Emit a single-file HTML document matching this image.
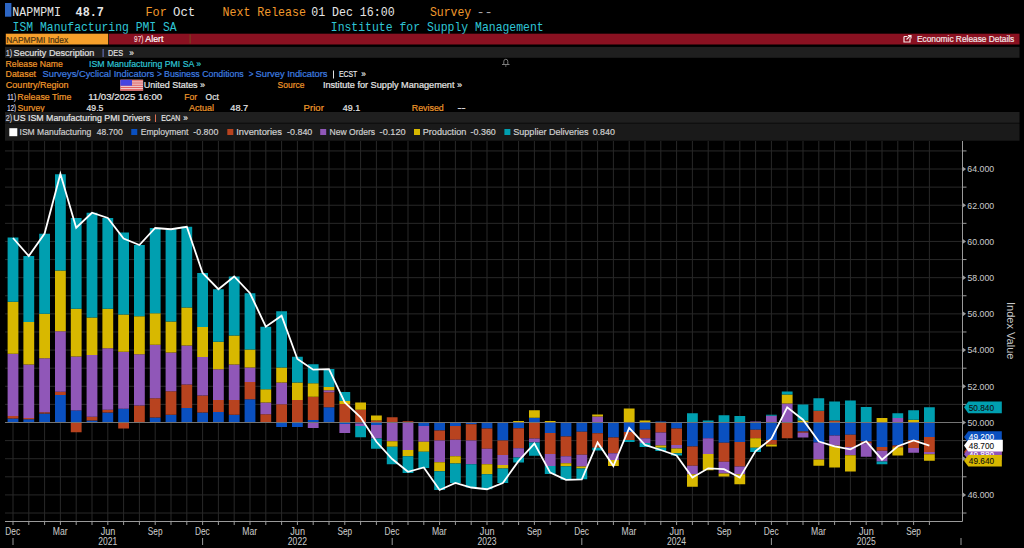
<!DOCTYPE html>
<html><head><meta charset="utf-8">
<style>
html,body{margin:0;padding:0;background:#000;width:1024px;height:548px;overflow:hidden}
svg{display:block;position:absolute;left:0;top:0}
text{font-family:"Liberation Sans",sans-serif}
text.m{font-family:"Liberation Mono",monospace;font-size:11.3px}
text.yl{font-size:9.5px;fill:#c4c4c4}
text.xl{font-size:9.5px;fill:#c4c4c4;text-anchor:middle}
text.rl{font-size:9.5px}
text.iv{font-size:10px;fill:#c4c4c4}
</style></head>
<body>
<svg width="1024" height="548" viewBox="0 0 1024 548"><rect x="5" y="3" width="6.4" height="13.7" fill="#2d66c4"/><text transform="translate(12.37 16) scale(1 1.2)" style='font-family:"Liberation Mono",monospace' font-size="11.3" fill="#e6e6e6" textLength="48.59" lengthAdjust="spacingAndGlyphs">NAPMPMI</text><text transform="translate(75.59 16) scale(1 1.2)" style='font-family:"Liberation Mono",monospace' font-size="11.3" font-weight="bold" fill="#e6e6e6" textLength="28.18" lengthAdjust="spacingAndGlyphs">48.7</text><text transform="translate(145.47 16) scale(1 1.2)" style='font-family:"Liberation Mono",monospace' font-size="11.3" fill="#f0992c" textLength="21.4" lengthAdjust="spacingAndGlyphs">For</text><text transform="translate(172.98 16) scale(1 1.2)" style='font-family:"Liberation Mono",monospace' font-size="11.3" fill="#e6e6e6" textLength="22.22" lengthAdjust="spacingAndGlyphs">Oct</text><text transform="translate(222.57 16) scale(1 1.2)" style='font-family:"Liberation Mono",monospace' font-size="11.3" fill="#f0992c" textLength="83.29" lengthAdjust="spacingAndGlyphs">Next Release</text><text transform="translate(311.21 16) scale(1 1.2)" style='font-family:"Liberation Mono",monospace' font-size="11.3" fill="#e6e6e6" textLength="83.4" lengthAdjust="spacingAndGlyphs">01 Dec 16:00</text><text transform="translate(429.94 16) scale(1 1.2)" style='font-family:"Liberation Mono",monospace' font-size="11.3" fill="#f0992c" textLength="41.26" lengthAdjust="spacingAndGlyphs">Survey</text><text transform="translate(476.46 16) scale(1 1.2)" style='font-family:"Liberation Mono",monospace' font-size="11.3" fill="#a8a8a8" textLength="16.28" lengthAdjust="spacingAndGlyphs">--</text><text transform="translate(12.61 30.85) scale(1 1.2)" style='font-family:"Liberation Mono",monospace' font-size="11.3" fill="#2fc6d6" textLength="164.11" lengthAdjust="spacingAndGlyphs">ISM Manufacturing PMI SA</text><text transform="translate(330.76 30.85) scale(1 1.2)" style='font-family:"Liberation Mono",monospace' font-size="11.3" fill="#2fc6d6" textLength="212.97" lengthAdjust="spacingAndGlyphs">Institute for Supply Management</text><rect x="5.8" y="33.7" width="102.4" height="10.8" fill="#f7a02b"/><rect x="109" y="33.7" width="910.5" height="10.8" fill="#8a1121"/><rect x="189.6" y="34.5" width="1" height="9" fill="#7a4a20"/><text x="6.33" y="42.5" style='font-family:"Liberation Sans",sans-serif' font-size="9.2" fill="#4a3210" textLength="61.76" lengthAdjust="spacingAndGlyphs" stroke="#4a3210" stroke-width="0.2">NAPMPMI Index</text><text x="134.11" y="42.2" style='font-family:"Liberation Sans",sans-serif' font-size="9.2" fill="#f0d0d0" textLength="9.31" lengthAdjust="spacingAndGlyphs" stroke="#f0d0d0" stroke-width="0.2">97)</text><text x="145.3" y="42.2" style='font-family:"Liberation Sans",sans-serif' font-size="9.2" fill="#ffffff" textLength="18.16" lengthAdjust="spacingAndGlyphs" stroke="#ffffff" stroke-width="0.2">Alert</text><path d="M904 36.5h3.5M904 36.5v5.5h6v-3.5M906.5 39.5l4-4M908 35.5h3v3" stroke="#f4e4e4" stroke-width="1.2" fill="none"/><text x="916.93" y="41.9" style='font-family:"Liberation Sans",sans-serif' font-size="9.2" fill="#f4e8e8" textLength="97.38" lengthAdjust="spacingAndGlyphs" stroke="#f4e8e8" stroke-width="0.2">Economic Release Details</text><rect x="5" y="46.9" width="1014.5" height="10.9" fill="#1f1f1f"/><text x="5.65" y="56.2" style='font-family:"Liberation Sans",sans-serif' font-size="9.2" fill="#c8c8d8" textLength="6.52" lengthAdjust="spacingAndGlyphs" stroke="#c8c8d8" stroke-width="0.2">1)</text><text x="13.59" y="56.2" style='font-family:"Liberation Sans",sans-serif' font-size="9.2" fill="#e0e0e0" textLength="80.77" lengthAdjust="spacingAndGlyphs" stroke="#e0e0e0" stroke-width="0.2">Security Description</text><rect x="102.6" y="49" width="1" height="8" fill="#6a7ad0"/><text x="108.02" y="56.2" style='font-family:"Liberation Sans",sans-serif' font-size="9.2" fill="#e0e0e0" textLength="15.02" lengthAdjust="spacingAndGlyphs" stroke="#e0e0e0" stroke-width="0.2">DES</text><text x="129.37" y="56.2" style='font-family:"Liberation Sans",sans-serif' font-size="9.2" fill="#e0e0e0" textLength="4.57" lengthAdjust="spacingAndGlyphs" stroke="#e0e0e0" stroke-width="0.2">»</text><path d="M502 64.5h7.5M503.8 64.5v-3.2a2 2 0 0 1 4 0v3.2M505 66h1.5" stroke="#8a8a8a" stroke-width="0.9" fill="none"/><text x="5.56" y="66.7" style='font-family:"Liberation Sans",sans-serif' font-size="9.2" fill="#f0992c" textLength="57.33" lengthAdjust="spacingAndGlyphs" stroke="#f0992c" stroke-width="0.2">Release Name</text><text x="89.01" y="66.7" style='font-family:"Liberation Sans",sans-serif' font-size="9.2" fill="#2fc6d6" textLength="112.13" lengthAdjust="spacingAndGlyphs" stroke="#2fc6d6" stroke-width="0.2">ISM Manufacturing PMI SA »</text><text x="5.54" y="77.3" style='font-family:"Liberation Sans",sans-serif' font-size="9.2" fill="#f0992c" textLength="30.51" lengthAdjust="spacingAndGlyphs" stroke="#f0992c" stroke-width="0.2">Dataset</text><text x="42.58" y="77.3" style='font-family:"Liberation Sans",sans-serif' font-size="9.2" fill="#3f7fe0" textLength="111.63" lengthAdjust="spacingAndGlyphs" stroke="#3f7fe0" stroke-width="0.2">Surveys/Cyclical Indicators</text><text x="156.88" y="77.3" style='font-family:"Liberation Sans",sans-serif' font-size="9.2" fill="#3f7fe0" textLength="4.94" lengthAdjust="spacingAndGlyphs" stroke="#3f7fe0" stroke-width="0.2">&gt;</text><text x="164.1" y="77.3" style='font-family:"Liberation Sans",sans-serif' font-size="9.2" fill="#3f7fe0" textLength="79.62" lengthAdjust="spacingAndGlyphs" stroke="#3f7fe0" stroke-width="0.2">Business Conditions</text><text x="248.79" y="77.3" style='font-family:"Liberation Sans",sans-serif' font-size="9.2" fill="#3f7fe0" textLength="4.82" lengthAdjust="spacingAndGlyphs" stroke="#3f7fe0" stroke-width="0.2">&gt;</text><text x="255.58" y="77.3" style='font-family:"Liberation Sans",sans-serif' font-size="9.2" fill="#3f7fe0" textLength="71.95" lengthAdjust="spacingAndGlyphs" stroke="#3f7fe0" stroke-width="0.2">Survey Indicators</text><rect x="333" y="70.5" width="1" height="8" fill="#e0e0e0"/><text x="338.95" y="77.3" style='font-family:"Liberation Sans",sans-serif' font-size="9.2" fill="#e6e6e6" textLength="18.2" lengthAdjust="spacingAndGlyphs" stroke="#e6e6e6" stroke-width="0.2">ECST</text><text x="361.17" y="77.3" style='font-family:"Liberation Sans",sans-serif' font-size="9.2" fill="#e6e6e6" textLength="4.57" lengthAdjust="spacingAndGlyphs" stroke="#e6e6e6" stroke-width="0.2">»</text><text x="5.8" y="87.9" style='font-family:"Liberation Sans",sans-serif' font-size="9.2" fill="#f0992c" textLength="62.82" lengthAdjust="spacingAndGlyphs" stroke="#f0992c" stroke-width="0.2">Country/Region</text><rect x="120.3" y="79.8" width="22.8" height="10.85" fill="#f2dede"/><rect x="120.3" y="79.8" width="22.8" height="0.95" fill="#de5a5a"/><rect x="120.3" y="81.61" width="22.8" height="0.95" fill="#de5a5a"/><rect x="120.3" y="83.42" width="22.8" height="0.95" fill="#de5a5a"/><rect x="120.3" y="85.22999999999999" width="22.8" height="0.95" fill="#de5a5a"/><rect x="120.3" y="87.03999999999999" width="22.8" height="0.95" fill="#de5a5a"/><rect x="120.3" y="88.85" width="22.8" height="0.95" fill="#de5a5a"/><rect x="120.3" y="89.7" width="22.8" height="0.95" fill="#de5a5a"/><rect x="120.3" y="79.8" width="11.7" height="5.9" fill="#4444e0"/><text x="143.83" y="87.9" style='font-family:"Liberation Sans",sans-serif' font-size="9.2" fill="#e6e6e6" textLength="61.25" lengthAdjust="spacingAndGlyphs" stroke="#e6e6e6" stroke-width="0.2">United States »</text><text x="277.62" y="87.9" style='font-family:"Liberation Sans",sans-serif' font-size="9.2" fill="#f0992c" textLength="26.79" lengthAdjust="spacingAndGlyphs" stroke="#f0992c" stroke-width="0.2">Source</text><text x="322.88" y="87.9" style='font-family:"Liberation Sans",sans-serif' font-size="9.2" fill="#e6e6e6" textLength="139.2" lengthAdjust="spacingAndGlyphs" stroke="#e6e6e6" stroke-width="0.2">Institute for Supply Management »</text><text x="7.33" y="99.75" style='font-family:"Liberation Sans",sans-serif' font-size="9.2" fill="#d8d8e8" textLength="8.66" lengthAdjust="spacingAndGlyphs" stroke="#d8d8e8" stroke-width="0.2">11)</text><text x="17.29" y="99.75" style='font-family:"Liberation Sans",sans-serif' font-size="9.2" fill="#f0992c" textLength="54.1" lengthAdjust="spacingAndGlyphs" stroke="#f0992c" stroke-width="0.2">Release Time</text><text x="88.28" y="99.75" style='font-family:"Liberation Sans",sans-serif' font-size="9.2" fill="#e6e6e6" textLength="73.76" lengthAdjust="spacingAndGlyphs" stroke="#e6e6e6" stroke-width="0.2">11/03/2025 16:00</text><text x="184.31" y="99.75" style='font-family:"Liberation Sans",sans-serif' font-size="9.2" fill="#f0992c" textLength="12.86" lengthAdjust="spacingAndGlyphs" stroke="#f0992c" stroke-width="0.2">For</text><text x="205.62" y="99.75" style='font-family:"Liberation Sans",sans-serif' font-size="9.2" fill="#e6e6e6" textLength="13.18" lengthAdjust="spacingAndGlyphs" stroke="#e6e6e6" stroke-width="0.2">Oct</text><text x="7.35" y="110.5" style='font-family:"Liberation Sans",sans-serif' font-size="9.2" fill="#d8d8e8" textLength="8.64" lengthAdjust="spacingAndGlyphs" stroke="#d8d8e8" stroke-width="0.2">12)</text><text x="17.61" y="110.5" style='font-family:"Liberation Sans",sans-serif' font-size="9.2" fill="#f0992c" textLength="26.91" lengthAdjust="spacingAndGlyphs" stroke="#f0992c" stroke-width="0.2">Survey</text><text x="86.53" y="110.5" style='font-family:"Liberation Sans",sans-serif' font-size="9.2" fill="#e6e6e6" textLength="16.83" lengthAdjust="spacingAndGlyphs" stroke="#e6e6e6" stroke-width="0.2">49.5</text><text x="189" y="110.5" style='font-family:"Liberation Sans",sans-serif' font-size="9.2" fill="#f0992c" textLength="24.92" lengthAdjust="spacingAndGlyphs" stroke="#f0992c" stroke-width="0.2">Actual</text><text x="230.32" y="110.5" style='font-family:"Liberation Sans",sans-serif' font-size="9.2" fill="#e6e6e6" textLength="17.85" lengthAdjust="spacingAndGlyphs" stroke="#e6e6e6" stroke-width="0.2">48.7</text><text x="303.63" y="110.5" style='font-family:"Liberation Sans",sans-serif' font-size="9.2" fill="#f0992c" textLength="20.22" lengthAdjust="spacingAndGlyphs" stroke="#f0992c" stroke-width="0.2">Prior</text><text x="342.82" y="110.5" style='font-family:"Liberation Sans",sans-serif' font-size="9.2" fill="#e6e6e6" textLength="17.39" lengthAdjust="spacingAndGlyphs" stroke="#e6e6e6" stroke-width="0.2">49.1</text><text x="411.79" y="110.5" style='font-family:"Liberation Sans",sans-serif' font-size="9.2" fill="#f0992c" textLength="32.01" lengthAdjust="spacingAndGlyphs" stroke="#f0992c" stroke-width="0.2">Revised</text><text x="457.46" y="110.5" style='font-family:"Liberation Sans",sans-serif' font-size="9.2" fill="#e6e6e6" textLength="8.04" lengthAdjust="spacingAndGlyphs" stroke="#e6e6e6" stroke-width="0.2">--</text><rect x="5" y="112" width="1014.5" height="10.8" fill="#1f1f1f"/><text x="5.85" y="121.2" style='font-family:"Liberation Sans",sans-serif' font-size="9.2" fill="#c8c8d8" textLength="6.31" lengthAdjust="spacingAndGlyphs" stroke="#c8c8d8" stroke-width="0.2">2)</text><text x="13.34" y="121.2" style='font-family:"Liberation Sans",sans-serif' font-size="9.2" fill="#e6e6e6" textLength="136.97" lengthAdjust="spacingAndGlyphs" stroke="#e6e6e6" stroke-width="0.2">US ISM Manufacturing PMI Drivers</text><rect x="155" y="114.5" width="1" height="7.5" fill="#e07050"/><text x="161.15" y="121.2" style='font-family:"Liberation Sans",sans-serif' font-size="9.2" fill="#e6e6e6" textLength="19.12" lengthAdjust="spacingAndGlyphs" stroke="#e6e6e6" stroke-width="0.2">ECAN</text><text x="183.27" y="121.2" style='font-family:"Liberation Sans",sans-serif' font-size="9.2" fill="#e6e6e6" textLength="4.57" lengthAdjust="spacingAndGlyphs" stroke="#e6e6e6" stroke-width="0.2">»</text><rect x="5" y="123.4" width="1014.5" height="17.3" fill="#1a1a1a"/><rect x="9.3" y="128.2" width="8" height="8" fill="#ffffff"/><text x="19.53" y="135.2" style='font-family:"Liberation Sans",sans-serif' font-size="9.2" fill="#cfcfcf" textLength="71.65" lengthAdjust="spacingAndGlyphs" stroke="#cfcfcf" stroke-width="0.2">ISM Manufacturing</text><text x="96.73" y="135.2" style='font-family:"Liberation Sans",sans-serif' font-size="9.2" fill="#cfcfcf" textLength="26.06" lengthAdjust="spacingAndGlyphs" stroke="#cfcfcf" stroke-width="0.2">48.700</text><rect x="131.25" y="129" width="6" height="6" fill="#0a50c0"/><text x="140.71" y="135.2" style='font-family:"Liberation Sans",sans-serif' font-size="9.2" fill="#cfcfcf" textLength="47.65" lengthAdjust="spacingAndGlyphs" stroke="#cfcfcf" stroke-width="0.2">Employment</text><text x="193.35" y="135.2" style='font-family:"Liberation Sans",sans-serif' font-size="9.2" fill="#cfcfcf" textLength="24.96" lengthAdjust="spacingAndGlyphs" stroke="#cfcfcf" stroke-width="0.2">-0.800</text><rect x="227.3" y="129" width="6" height="6" fill="#b8431f"/><text x="236.16" y="135.2" style='font-family:"Liberation Sans",sans-serif' font-size="9.2" fill="#cfcfcf" textLength="45.79" lengthAdjust="spacingAndGlyphs" stroke="#cfcfcf" stroke-width="0.2">Inventories</text><text x="287" y="135.2" style='font-family:"Liberation Sans",sans-serif' font-size="9.2" fill="#cfcfcf" textLength="25.32" lengthAdjust="spacingAndGlyphs" stroke="#cfcfcf" stroke-width="0.2">-0.840</text><rect x="320.2" y="129" width="6" height="6" fill="#9057b8"/><text x="329.62" y="135.2" style='font-family:"Liberation Sans",sans-serif' font-size="9.2" fill="#cfcfcf" textLength="45.48" lengthAdjust="spacingAndGlyphs" stroke="#cfcfcf" stroke-width="0.2">New Orders</text><text x="379.59" y="135.2" style='font-family:"Liberation Sans",sans-serif' font-size="9.2" fill="#cfcfcf" textLength="26.04" lengthAdjust="spacingAndGlyphs" stroke="#cfcfcf" stroke-width="0.2">-0.120</text><rect x="414" y="129" width="6" height="6" fill="#d8b800"/><text x="422.77" y="135.2" style='font-family:"Liberation Sans",sans-serif' font-size="9.2" fill="#cfcfcf" textLength="43.53" lengthAdjust="spacingAndGlyphs" stroke="#cfcfcf" stroke-width="0.2">Production</text><text x="470.6" y="135.2" style='font-family:"Liberation Sans",sans-serif' font-size="9.2" fill="#cfcfcf" textLength="25.22" lengthAdjust="spacingAndGlyphs" stroke="#cfcfcf" stroke-width="0.2">-0.360</text><rect x="504.4" y="129" width="6" height="6" fill="#009fb0"/><text x="513.29" y="135.2" style='font-family:"Liberation Sans",sans-serif' font-size="9.2" fill="#cfcfcf" textLength="75.34" lengthAdjust="spacingAndGlyphs" stroke="#cfcfcf" stroke-width="0.2">Supplier Deliveries</text><text x="592.65" y="135.2" style='font-family:"Liberation Sans",sans-serif' font-size="9.2" fill="#cfcfcf" textLength="22.19" lengthAdjust="spacingAndGlyphs" stroke="#cfcfcf" stroke-width="0.2">0.840</text><path d="M5 513.02H962.5M5 494.92H962.5M5 476.81H962.5M5 458.71H962.5M5 440.61H962.5M5 422.5H962.5M5 404.39H962.5M5 386.29H962.5M5 368.19H962.5M5 350.08H962.5M5 331.98H962.5M5 313.87H962.5M5 295.76H962.5M5 277.66H962.5M5 259.56H962.5M5 241.45H962.5M5 223.34H962.5M5 205.24H962.5M5 187.13H962.5M5 169.03H962.5M5 150.93H962.5M13 141V521.5M28.8 141V521.5M44.6 141V521.5M60.4 141V521.5M76.2 141V521.5M92 141V521.5M107.8 141V521.5M123.6 141V521.5M139.4 141V521.5M155.2 141V521.5M171 141V521.5M186.8 141V521.5M202.6 141V521.5M218.4 141V521.5M234.2 141V521.5M250 141V521.5M265.8 141V521.5M281.6 141V521.5M297.4 141V521.5M313.2 141V521.5M329 141V521.5M344.8 141V521.5M360.6 141V521.5M376.4 141V521.5M392.2 141V521.5M408 141V521.5M423.8 141V521.5M439.6 141V521.5M455.4 141V521.5M471.2 141V521.5M487 141V521.5M502.8 141V521.5M518.6 141V521.5M534.4 141V521.5M550.2 141V521.5M566 141V521.5M581.8 141V521.5M597.6 141V521.5M613.4 141V521.5M629.2 141V521.5M645 141V521.5M660.8 141V521.5M676.6 141V521.5M692.4 141V521.5M708.2 141V521.5M724 141V521.5M739.8 141V521.5M755.6 141V521.5M771.4 141V521.5M787.2 141V521.5M803 141V521.5M818.8 141V521.5M834.6 141V521.5M850.4 141V521.5M866.2 141V521.5M882 141V521.5M897.8 141V521.5M913.6 141V521.5M929.4 141V521.5" stroke="#282828" stroke-width="1" fill="none"/><path d="M7.6 418.5h10.8v4h-10.8zM23.4 419.25h10.8v3.25h-10.8zM39.2 413.5h10.8v9h-10.8zM55 395h10.8v27.5h-10.8zM70.8 410.5h10.8v12h-10.8zM86.6 420.5h10.8v2h-10.8zM102.4 412.5h10.8v10h-10.8zM118.2 408.75h10.8v13.75h-10.8zM149.8 417.5h10.8v5h-10.8zM165.6 414.75h10.8v7.75h-10.8zM181.4 408h10.8v14.5h-10.8zM197.2 412.5h10.8v10h-10.8zM213 412h10.8v10.5h-10.8zM228.8 414.75h10.8v7.75h-10.8zM244.6 399.25h10.8v23.25h-10.8zM276.2 422.5h10.8v4.4h-10.8zM292 422.5h10.8v4.4h-10.8zM307.8 419.9h10.8v2.6h-10.8zM323.6 407.3h10.8v15.2h-10.8zM339.4 422.5h10.8v1.4h-10.8zM355.2 422.5h10.8v1h-10.8zM371 422.5h10.8v2.5h-10.8zM386.8 422.5h10.8v0.5h-10.8zM418.4 422.5h10.8v3.5h-10.8zM434.2 422.5h10.8v8h-10.8zM450 422.5h10.8v3.5h-10.8zM465.8 422.5h10.8v1.75h-10.8zM481.6 422.5h10.8v6h-10.8zM497.4 422.5h10.8v18h-10.8zM513.2 422.5h10.8v5.8h-10.8zM529 417.7h10.8v4.8h-10.8zM544.8 422.5h10.8v10.5h-10.8zM560.6 422.5h10.8v14.1h-10.8zM576.4 422.5h10.8v9.2h-10.8zM592.2 422.5h10.8v10.8h-10.8zM608 422.5h10.8v14.9h-10.8zM623.8 422.5h10.8v9.5h-10.8zM639.6 422.5h10.8v7.2h-10.8zM655.4 421.5h10.8v1h-10.8zM671.2 422.5h10.8v5.9h-10.8zM687 422.5h10.8v23.9h-10.8zM702.8 422.5h10.8v15.8h-10.8zM718.6 422.5h10.8v20.2h-10.8zM734.4 422.5h10.8v19.5h-10.8zM750.2 422.5h10.8v7.2h-10.8zM766 422.5h10.8v17.4h-10.8zM797.6 422.5h10.8v8.9h-10.8zM813.4 422.5h10.8v20h-10.8zM829.2 422.5h10.8v13h-10.8zM845 422.5h10.8v12.2h-10.8zM860.8 422.5h10.8v19.1h-10.8zM876.6 422.5h10.8v24.5h-10.8zM892.4 422.5h10.8v23.1h-10.8zM908.2 422.5h10.8v17.4h-10.8zM924 422.5h10.8v14.44h-10.8z" fill="#0a50c0"/><path d="M7.6 416h10.8v2.5h-10.8zM23.4 418h10.8v1.25h-10.8zM39.2 412.25h10.8v1.25h-10.8zM55 391.75h10.8v3.25h-10.8zM70.8 422.5h10.8v9.75h-10.8zM86.6 416.75h10.8v3.75h-10.8zM102.4 409.75h10.8v2.75h-10.8zM118.2 422.5h10.8v6h-10.8zM134 405.5h10.8v17h-10.8zM149.8 398.25h10.8v19.25h-10.8zM165.6 391.25h10.8v23.5h-10.8zM181.4 384.5h10.8v23.5h-10.8zM197.2 395.5h10.8v17h-10.8zM213 400h10.8v12h-10.8zM228.8 400h10.8v14.75h-10.8zM244.6 382h10.8v17.25h-10.8zM260.4 414.25h10.8v8.25h-10.8zM276.2 404.25h10.8v18.25h-10.8zM292 400h10.8v22.5h-10.8zM307.8 396.65h10.8v23.25h-10.8zM323.6 392.3h10.8v15h-10.8zM339.4 404h10.8v18.5h-10.8zM355.2 409.75h10.8v12.75h-10.8zM371 420.5h10.8v2h-10.8zM386.8 417.25h10.8v5.25h-10.8zM402.6 421.25h10.8v1.25h-10.8zM418.4 422h10.8v0.5h-10.8zM434.2 430.5h10.8v10h-10.8zM450 426h10.8v13.75h-10.8zM465.8 424.25h10.8v16.25h-10.8zM481.6 428.5h10.8v20.25h-10.8zM497.4 440.5h10.8v14.5h-10.8zM513.2 428.3h10.8v20h-10.8zM529 422.5h10.8v16h-10.8zM544.8 433h10.8v20.9h-10.8zM560.6 436.6h10.8v19.7h-10.8zM576.4 431.7h10.8v23h-10.8zM592.2 433.3h10.8v14.4h-10.8zM608 437.4h10.8v15.9h-10.8zM623.8 432h10.8v7.9h-10.8zM639.6 429.7h10.8v8.5h-10.8zM655.4 422.5h10.8v10h-10.8zM671.2 428.4h10.8v16.7h-10.8zM687 446.4h10.8v19.4h-10.8zM702.8 422h10.8v0.5h-10.8zM718.6 442.7h10.8v19.1h-10.8zM734.4 442h10.8v24.6h-10.8zM750.2 429.7h10.8v8.5h-10.8zM766 439.9h10.8v4.6h-10.8zM781.8 422.5h10.8v15.8h-10.8zM797.6 431.4h10.8v1.3h-10.8zM813.4 410.8h10.8v11.7h-10.8zM829.2 420.4h10.8v2.1h-10.8zM845 434.7h10.8v12.3h-10.8zM860.8 441.6h10.8v1.6h-10.8zM876.6 447h10.8v3.8h-10.8zM892.4 445.6h10.8v1.6h-10.8zM908.2 439.9h10.8v8.2h-10.8zM924 436.94h10.8v15.16h-10.8z" fill="#b8431f"/><path d="M7.6 353.75h10.8v62.25h-10.8zM23.4 364.5h10.8v53.5h-10.8zM39.2 358.25h10.8v54h-10.8zM55 331.25h10.8v60.5h-10.8zM70.8 356.5h10.8v54h-10.8zM86.6 355h10.8v61.75h-10.8zM102.4 348.25h10.8v61.5h-10.8zM118.2 351.75h10.8v57h-10.8zM134 354.25h10.8v51.25h-10.8zM149.8 344.75h10.8v53.5h-10.8zM165.6 352.5h10.8v38.75h-10.8zM181.4 345.5h10.8v39h-10.8zM197.2 357h10.8v38.5h-10.8zM213 369.25h10.8v30.75h-10.8zM228.8 364.5h10.8v35.5h-10.8zM244.6 367.5h10.8v14.5h-10.8zM260.4 402.5h10.8v11.75h-10.8zM276.2 382.5h10.8v21.75h-10.8zM307.8 422.5h10.8v5.5h-10.8zM323.6 390.3h10.8v2h-10.8zM339.4 423.9h10.8v9.1h-10.8zM355.2 423.5h10.8v2.5h-10.8zM371 425h10.8v13.5h-10.8zM386.8 423h10.8v18.25h-10.8zM402.6 422.5h10.8v27.5h-10.8zM418.4 426h10.8v15.75h-10.8zM434.2 440.5h10.8v21.75h-10.8zM450 439.75h10.8v16.5h-10.8zM465.8 440.5h10.8v23.75h-10.8zM481.6 448.75h10.8v15.5h-10.8zM497.4 455h10.8v10h-10.8zM513.2 448.3h10.8v9.2h-10.8zM529 438.5h10.8v4.1h-10.8zM544.8 453.9h10.8v12h-10.8zM560.6 456.3h10.8v6.9h-10.8zM576.4 454.7h10.8v11.8h-10.8zM592.2 416.5h10.8v6h-10.8zM608 453.3h10.8v6.7h-10.8zM639.6 438.2h10.8v4.9h-10.8zM655.4 432.5h10.8v13.1h-10.8zM671.2 445.1h10.8v3.3h-10.8zM687 465.8h10.8v8.5h-10.8zM702.8 438.3h10.8v15.6h-10.8zM718.6 461.8h10.8v11.8h-10.8zM734.4 466.6h10.8v7.7h-10.8zM750.2 421.5h10.8v1h-10.8zM766 415.8h10.8v6.7h-10.8zM781.8 403.5h10.8v19h-10.8zM797.6 432.7h10.8v4.9h-10.8zM813.4 442.5h10.8v17.1h-10.8zM829.2 435.5h10.8v10.3h-10.8zM845 447h10.8v8.2h-10.8zM860.8 443.2h10.8v13.6h-10.8zM876.6 450.8h10.8v10.7h-10.8zM892.4 418.1h10.8v4.4h-10.8zM908.2 448.1h10.8v4.6h-10.8zM924 452.1h10.8v2.17h-10.8z" fill="#9057b8"/><path d="M7.6 301.75h10.8v52h-10.8zM23.4 322h10.8v42.5h-10.8zM39.2 313.75h10.8v44.5h-10.8zM55 270.5h10.8v60.75h-10.8zM70.8 308.75h10.8v47.75h-10.8zM86.6 317.5h10.8v37.5h-10.8zM102.4 308.75h10.8v39.5h-10.8zM118.2 314.5h10.8v37.25h-10.8zM134 316.25h10.8v38h-10.8zM149.8 313.25h10.8v31.5h-10.8zM165.6 321.5h10.8v31h-10.8zM181.4 307.5h10.8v38h-10.8zM197.2 327h10.8v30h-10.8zM213 341.75h10.8v27.5h-10.8zM228.8 335.5h10.8v29h-10.8zM244.6 349.5h10.8v18h-10.8zM260.4 389.25h10.8v13.25h-10.8zM276.2 367.5h10.8v15h-10.8zM292 382.5h10.8v17.5h-10.8zM307.8 383.15h10.8v13.5h-10.8zM323.6 387.05h10.8v3.25h-10.8zM339.4 400.9h10.8v3.1h-10.8zM355.2 402.5h10.8v7.25h-10.8zM371 415.5h10.8v5h-10.8zM386.8 441.25h10.8v5.5h-10.8zM402.6 450h10.8v6.25h-10.8zM418.4 441.75h10.8v10h-10.8zM434.2 462.25h10.8v9h-10.8zM450 456.25h10.8v7.25h-10.8zM481.6 464.25h10.8v10h-10.8zM497.4 465h10.8v3.5h-10.8zM513.2 421h10.8v1.5h-10.8zM529 410.3h10.8v7.4h-10.8zM544.8 421h10.8v1.5h-10.8zM560.6 463.2h10.8v3h-10.8zM576.4 466.5h10.8v2.1h-10.8zM592.2 414.4h10.8v2.1h-10.8zM608 460h10.8v6.1h-10.8zM623.8 408.4h10.8v14.1h-10.8zM639.6 420.5h10.8v2h-10.8zM655.4 445.6h10.8v2.1h-10.8zM671.2 448.4h10.8v4.9h-10.8zM687 474.3h10.8v12.5h-10.8zM702.8 453.9h10.8v16.4h-10.8zM718.6 473.6h10.8v2.8h-10.8zM734.4 474.3h10.8v9.9h-10.8zM750.2 438.2h10.8v9.5h-10.8zM766 444.5h10.8v2h-10.8zM781.8 394.5h10.8v9h-10.8zM797.6 420.4h10.8v2.1h-10.8zM813.4 459.6h10.8v6.2h-10.8zM829.2 445.8h10.8v21.7h-10.8zM845 455.2h10.8v16.2h-10.8zM860.8 422h10.8v0.5h-10.8zM876.6 417.9h10.8v4.6h-10.8zM892.4 447.2h10.8v8.2h-10.8zM908.2 419.7h10.8v2.8h-10.8zM924 454.27h10.8v6.5h-10.8z" fill="#d8b800"/><path d="M7.6 237.5h10.8v64.25h-10.8zM23.4 256h10.8v66h-10.8zM39.2 233.75h10.8v80h-10.8zM55 174.25h10.8v96.25h-10.8zM70.8 218h10.8v90.75h-10.8zM86.6 212.75h10.8v104.75h-10.8zM102.4 218h10.8v90.75h-10.8zM118.2 232.5h10.8v82h-10.8zM134 245h10.8v71.25h-10.8zM149.8 228h10.8v85.25h-10.8zM165.6 229.25h10.8v92.25h-10.8zM181.4 226.75h10.8v80.75h-10.8zM197.2 273h10.8v54h-10.8zM213 289.25h10.8v52.5h-10.8zM228.8 276.5h10.8v59h-10.8zM244.6 293.25h10.8v56.25h-10.8zM260.4 326.75h10.8v62.5h-10.8zM276.2 311.25h10.8v56.25h-10.8zM292 356.75h10.8v25.75h-10.8zM307.8 364.15h10.8v19h-10.8zM323.6 369.05h10.8v18h-10.8zM339.4 391.9h10.8v9h-10.8zM355.2 426h10.8v11.25h-10.8zM371 438.5h10.8v10.25h-10.8zM386.8 446.75h10.8v17.5h-10.8zM402.6 456.25h10.8v16.75h-10.8zM418.4 451.75h10.8v16.25h-10.8zM434.2 471.25h10.8v18.75h-10.8zM450 463.5h10.8v19.5h-10.8zM465.8 464.25h10.8v23.25h-10.8zM481.6 474.25h10.8v15h-10.8zM497.4 468.5h10.8v14.5h-10.8zM513.2 457.5h10.8v4.9h-10.8zM529 442.6h10.8v13.2h-10.8zM544.8 465.9h10.8v8.2h-10.8zM560.6 466.2h10.8v13.6h-10.8zM576.4 468.6h10.8v10.7h-10.8zM592.2 447.7h10.8v2.8h-10.8zM623.8 439.9h10.8v2h-10.8zM639.6 443.1h10.8v3.8h-10.8zM655.4 447.7h10.8v3.3h-10.8zM671.2 453.3h10.8v2.1h-10.8zM687 413.3h10.8v9.2h-10.8zM702.8 420.5h10.8v1.5h-10.8zM718.6 415.3h10.8v7.2h-10.8zM734.4 415.9h10.8v6.6h-10.8zM750.2 447.7h10.8v4.4h-10.8zM766 414.7h10.8v1.1h-10.8zM781.8 391.5h10.8v3h-10.8zM797.6 404.6h10.8v15.8h-10.8zM813.4 398.2h10.8v12.6h-10.8zM829.2 401.4h10.8v19h-10.8zM845 400.5h10.8v22h-10.8zM860.8 407h10.8v15h-10.8zM876.6 461.5h10.8v2.8h-10.8zM892.4 413.3h10.8v4.8h-10.8zM908.2 410.3h10.8v9.4h-10.8zM924 407.34h10.8v15.16h-10.8z" fill="#009fb0"/><path d="M5 422.5H962.5" stroke="#747474" stroke-width="1"/><polyline points="13,238 28.8,256 44.6,233.6 60.4,173.8 76.2,227.75 92,212.75 107.8,218 123.6,238.5 139.4,245 155.2,228 171,229.25 186.8,226.75 202.6,273 218.4,289.25 234.2,276.5 250,293.25 265.8,326.75 281.6,315.65 297.4,359 313.2,369.65 329,369.05 344.8,402.4 360.6,417.25 376.4,441.75 392.2,459 408,471.75 423.8,467.5 439.6,490 455.4,483 471.2,487.5 487,489.25 502.8,483 518.6,460.9 534.4,443.6 550.2,472.6 566,479.8 581.8,479.3 597.6,442.4 613.4,466.1 629.2,427.8 645,444.9 660.8,450 676.6,455.4 692.4,477.6 708.2,468.3 724,469.2 739.8,477.6 755.6,451.1 771.4,438.7 787.2,407.3 803,419.7 818.8,441.5 834.6,446.4 850.4,449.4 866.2,441.3 882,459.7 897.8,446.2 913.6,440.5 929.4,445.61" fill="none" stroke="#ffffff" stroke-width="1.8" stroke-linejoin="miter" stroke-miterlimit="10"/><path d="M962.5 141V521.5M5 521.5H962.5M962.5 513.02h4M962.5 476.81h4M962.5 440.61h4M962.5 404.39h4M962.5 368.19h4M962.5 331.98h4M962.5 295.76h4M962.5 259.56h4M962.5 223.34h4M962.5 187.13h4M962.5 150.93h4M13 521.5v3.5M28.8 521.5v3.5M44.6 521.5v3.5M60.4 521.5v3.5M76.2 521.5v3.5M92 521.5v3.5M107.8 521.5v3.5M123.6 521.5v3.5M139.4 521.5v3.5M155.2 521.5v3.5M171 521.5v3.5M186.8 521.5v3.5M202.6 521.5v3.5M218.4 521.5v3.5M234.2 521.5v3.5M250 521.5v3.5M265.8 521.5v3.5M281.6 521.5v3.5M297.4 521.5v3.5M313.2 521.5v3.5M329 521.5v3.5M344.8 521.5v3.5M360.6 521.5v3.5M376.4 521.5v3.5M392.2 521.5v3.5M408 521.5v3.5M423.8 521.5v3.5M439.6 521.5v3.5M455.4 521.5v3.5M471.2 521.5v3.5M487 521.5v3.5M502.8 521.5v3.5M518.6 521.5v3.5M534.4 521.5v3.5M550.2 521.5v3.5M566 521.5v3.5M581.8 521.5v3.5M597.6 521.5v3.5M613.4 521.5v3.5M629.2 521.5v3.5M645 521.5v3.5M660.8 521.5v3.5M676.6 521.5v3.5M692.4 521.5v3.5M708.2 521.5v3.5M724 521.5v3.5M739.8 521.5v3.5M755.6 521.5v3.5M771.4 521.5v3.5M787.2 521.5v3.5M803 521.5v3.5M818.8 521.5v3.5M834.6 521.5v3.5M850.4 521.5v3.5M866.2 521.5v3.5M882 521.5v3.5M897.8 521.5v3.5M913.6 521.5v3.5M929.4 521.5v3.5M13 538v7M202.6 538v7M392.2 538v7M581.8 538v7M771.4 538v7M961 538v7" stroke="#9a9a9a" stroke-width="1" fill="none"/><path d="M962.5 492.32l3.6 2.6l-3.6 2.6zM962.5 456.11l3.6 2.6l-3.6 2.6zM962.5 419.9l3.6 2.6l-3.6 2.6zM962.5 383.69l3.6 2.6l-3.6 2.6zM962.5 347.48l3.6 2.6l-3.6 2.6zM962.5 311.27l3.6 2.6l-3.6 2.6zM962.5 275.06l3.6 2.6l-3.6 2.6zM962.5 238.85l3.6 2.6l-3.6 2.6zM962.5 202.64l3.6 2.6l-3.6 2.6zM962.5 166.43l3.6 2.6l-3.6 2.6z" fill="#9a9a9a"/><text x="967.63" y="498.32" style='font-family:"Liberation Sans",sans-serif' font-size="9.6" fill="#c8c8c8" textLength="26.57" lengthAdjust="spacingAndGlyphs" stroke="#c8c8c8" stroke-width="0.05">46.000</text><text x="967.63" y="462.11" style='font-family:"Liberation Sans",sans-serif' font-size="9.6" fill="#c8c8c8" textLength="26.57" lengthAdjust="spacingAndGlyphs" stroke="#c8c8c8" stroke-width="0.05">48.000</text><text x="967.45" y="425.9" style='font-family:"Liberation Sans",sans-serif' font-size="9.6" fill="#c8c8c8" textLength="26.74" lengthAdjust="spacingAndGlyphs" stroke="#c8c8c8" stroke-width="0.05">50.000</text><text x="967.45" y="389.69" style='font-family:"Liberation Sans",sans-serif' font-size="9.6" fill="#c8c8c8" textLength="26.74" lengthAdjust="spacingAndGlyphs" stroke="#c8c8c8" stroke-width="0.05">52.000</text><text x="967.45" y="353.48" style='font-family:"Liberation Sans",sans-serif' font-size="9.6" fill="#c8c8c8" textLength="26.74" lengthAdjust="spacingAndGlyphs" stroke="#c8c8c8" stroke-width="0.05">54.000</text><text x="967.45" y="317.27" style='font-family:"Liberation Sans",sans-serif' font-size="9.6" fill="#c8c8c8" textLength="26.74" lengthAdjust="spacingAndGlyphs" stroke="#c8c8c8" stroke-width="0.05">56.000</text><text x="967.45" y="281.06" style='font-family:"Liberation Sans",sans-serif' font-size="9.6" fill="#c8c8c8" textLength="26.74" lengthAdjust="spacingAndGlyphs" stroke="#c8c8c8" stroke-width="0.05">58.000</text><text x="967.36" y="244.85" style='font-family:"Liberation Sans",sans-serif' font-size="9.6" fill="#c8c8c8" textLength="26.83" lengthAdjust="spacingAndGlyphs" stroke="#c8c8c8" stroke-width="0.05">60.000</text><text x="967.36" y="208.64" style='font-family:"Liberation Sans",sans-serif' font-size="9.6" fill="#c8c8c8" textLength="26.83" lengthAdjust="spacingAndGlyphs" stroke="#c8c8c8" stroke-width="0.05">62.000</text><text x="967.36" y="172.43" style='font-family:"Liberation Sans",sans-serif' font-size="9.6" fill="#c8c8c8" textLength="26.83" lengthAdjust="spacingAndGlyphs" stroke="#c8c8c8" stroke-width="0.05">64.000</text><text x="5.33" y="534.6" style='font-family:"Liberation Sans",sans-serif' font-size="10" fill="#c8c8c8" textLength="14.86" lengthAdjust="spacingAndGlyphs" stroke="#c8c8c8" stroke-width="0.05">Dec</text><text x="52.71" y="534.6" style='font-family:"Liberation Sans",sans-serif' font-size="10" fill="#c8c8c8" textLength="14.84" lengthAdjust="spacingAndGlyphs" stroke="#c8c8c8" stroke-width="0.05">Mar</text><text x="100.66" y="534.6" style='font-family:"Liberation Sans",sans-serif' font-size="10" fill="#c8c8c8" textLength="14.75" lengthAdjust="spacingAndGlyphs" stroke="#c8c8c8" stroke-width="0.05">Jun</text><text x="147.83" y="534.6" style='font-family:"Liberation Sans",sans-serif' font-size="10" fill="#c8c8c8" textLength="14.7" lengthAdjust="spacingAndGlyphs" stroke="#c8c8c8" stroke-width="0.05">Sep</text><text x="194.93" y="534.6" style='font-family:"Liberation Sans",sans-serif' font-size="10" fill="#c8c8c8" textLength="14.86" lengthAdjust="spacingAndGlyphs" stroke="#c8c8c8" stroke-width="0.05">Dec</text><text x="242.31" y="534.6" style='font-family:"Liberation Sans",sans-serif' font-size="10" fill="#c8c8c8" textLength="14.84" lengthAdjust="spacingAndGlyphs" stroke="#c8c8c8" stroke-width="0.05">Mar</text><text x="290.26" y="534.6" style='font-family:"Liberation Sans",sans-serif' font-size="10" fill="#c8c8c8" textLength="14.75" lengthAdjust="spacingAndGlyphs" stroke="#c8c8c8" stroke-width="0.05">Jun</text><text x="337.43" y="534.6" style='font-family:"Liberation Sans",sans-serif' font-size="10" fill="#c8c8c8" textLength="14.7" lengthAdjust="spacingAndGlyphs" stroke="#c8c8c8" stroke-width="0.05">Sep</text><text x="384.53" y="534.6" style='font-family:"Liberation Sans",sans-serif' font-size="10" fill="#c8c8c8" textLength="14.86" lengthAdjust="spacingAndGlyphs" stroke="#c8c8c8" stroke-width="0.05">Dec</text><text x="431.91" y="534.6" style='font-family:"Liberation Sans",sans-serif' font-size="10" fill="#c8c8c8" textLength="14.84" lengthAdjust="spacingAndGlyphs" stroke="#c8c8c8" stroke-width="0.05">Mar</text><text x="479.86" y="534.6" style='font-family:"Liberation Sans",sans-serif' font-size="10" fill="#c8c8c8" textLength="14.75" lengthAdjust="spacingAndGlyphs" stroke="#c8c8c8" stroke-width="0.05">Jun</text><text x="527.03" y="534.6" style='font-family:"Liberation Sans",sans-serif' font-size="10" fill="#c8c8c8" textLength="14.7" lengthAdjust="spacingAndGlyphs" stroke="#c8c8c8" stroke-width="0.05">Sep</text><text x="574.13" y="534.6" style='font-family:"Liberation Sans",sans-serif' font-size="10" fill="#c8c8c8" textLength="14.86" lengthAdjust="spacingAndGlyphs" stroke="#c8c8c8" stroke-width="0.05">Dec</text><text x="621.51" y="534.6" style='font-family:"Liberation Sans",sans-serif' font-size="10" fill="#c8c8c8" textLength="14.84" lengthAdjust="spacingAndGlyphs" stroke="#c8c8c8" stroke-width="0.05">Mar</text><text x="669.46" y="534.6" style='font-family:"Liberation Sans",sans-serif' font-size="10" fill="#c8c8c8" textLength="14.75" lengthAdjust="spacingAndGlyphs" stroke="#c8c8c8" stroke-width="0.05">Jun</text><text x="716.63" y="534.6" style='font-family:"Liberation Sans",sans-serif' font-size="10" fill="#c8c8c8" textLength="14.7" lengthAdjust="spacingAndGlyphs" stroke="#c8c8c8" stroke-width="0.05">Sep</text><text x="763.73" y="534.6" style='font-family:"Liberation Sans",sans-serif' font-size="10" fill="#c8c8c8" textLength="14.86" lengthAdjust="spacingAndGlyphs" stroke="#c8c8c8" stroke-width="0.05">Dec</text><text x="811.11" y="534.6" style='font-family:"Liberation Sans",sans-serif' font-size="10" fill="#c8c8c8" textLength="14.84" lengthAdjust="spacingAndGlyphs" stroke="#c8c8c8" stroke-width="0.05">Mar</text><text x="859.06" y="534.6" style='font-family:"Liberation Sans",sans-serif' font-size="10" fill="#c8c8c8" textLength="14.75" lengthAdjust="spacingAndGlyphs" stroke="#c8c8c8" stroke-width="0.05">Jun</text><text x="906.23" y="534.6" style='font-family:"Liberation Sans",sans-serif' font-size="10" fill="#c8c8c8" textLength="14.7" lengthAdjust="spacingAndGlyphs" stroke="#c8c8c8" stroke-width="0.05">Sep</text><text x="98.27" y="544.5" style='font-family:"Liberation Sans",sans-serif' font-size="10" fill="#c8c8c8" textLength="19.01" lengthAdjust="spacingAndGlyphs" stroke="#c8c8c8" stroke-width="0.05">2021</text><text x="287.87" y="544.5" style='font-family:"Liberation Sans",sans-serif' font-size="10" fill="#c8c8c8" textLength="19.05" lengthAdjust="spacingAndGlyphs" stroke="#c8c8c8" stroke-width="0.05">2022</text><text x="477.47" y="544.5" style='font-family:"Liberation Sans",sans-serif' font-size="10" fill="#c8c8c8" textLength="18.96" lengthAdjust="spacingAndGlyphs" stroke="#c8c8c8" stroke-width="0.05">2023</text><text x="667.08" y="544.5" style='font-family:"Liberation Sans",sans-serif' font-size="10" fill="#c8c8c8" textLength="18.88" lengthAdjust="spacingAndGlyphs" stroke="#c8c8c8" stroke-width="0.05">2024</text><text x="856.67" y="544.5" style='font-family:"Liberation Sans",sans-serif' font-size="10" fill="#c8c8c8" textLength="18.96" lengthAdjust="spacingAndGlyphs" stroke="#c8c8c8" stroke-width="0.05">2025</text><path d="M964 407.34L968.3 401.54H1001.8V413.14H968.3z" fill="#009fb0"/><text x="968.67" y="410.74" style='font-family:"Liberation Sans",sans-serif' font-size="9.6" fill="#101010" textLength="25.41" lengthAdjust="spacingAndGlyphs" stroke="#101010" stroke-width="0.1">50.840</text><path d="M964 436.94L968.3 431.14H1001.8V442.74H968.3z" fill="#0a50c0"/><text x="968.83" y="440.34" style='font-family:"Liberation Sans",sans-serif' font-size="9.6" fill="#ffffff" textLength="25.24" lengthAdjust="spacingAndGlyphs" stroke="#ffffff" stroke-width="0.1">49.200</text><path d="M964 452.1L968.3 446.3H1001.8V457.9H968.3z" fill="#b8431f"/><text x="968.83" y="455.5" style='font-family:"Liberation Sans",sans-serif' font-size="9.6" fill="#ffffff" textLength="25.24" lengthAdjust="spacingAndGlyphs" stroke="#ffffff" stroke-width="0.1">49.160</text><path d="M964 454.27L968.3 448.47H1001.8V460.07H968.3z" fill="#9057b8"/><text x="968.83" y="457.67" style='font-family:"Liberation Sans",sans-serif' font-size="9.6" fill="#ffffff" textLength="25.24" lengthAdjust="spacingAndGlyphs" stroke="#ffffff" stroke-width="0.1">49.880</text><path d="M964 460.77L968.3 454.97H1001.8V466.57H968.3z" fill="#d8b800"/><text x="968.83" y="464.17" style='font-family:"Liberation Sans",sans-serif' font-size="9.6" fill="#101010" textLength="25.24" lengthAdjust="spacingAndGlyphs" stroke="#101010" stroke-width="0.1">49.640</text><path d="M964 445.61L968.3 439.81H1002.8V451.41H968.3z" fill="#ffffff"/><text x="968.83" y="449.01" style='font-family:"Liberation Sans",sans-serif' font-size="9.6" fill="#101010" textLength="25.24" lengthAdjust="spacingAndGlyphs" stroke="#101010" stroke-width="0.1">48.700</text><g transform="translate(1006.5 302.9) rotate(90)"><text x="-0.99" y="0" style='font-family:"Liberation Sans",sans-serif' font-size="11.5" fill="#c8c8c8" textLength="57.52" lengthAdjust="spacingAndGlyphs">Index Value</text></g></svg>
</body></html>
